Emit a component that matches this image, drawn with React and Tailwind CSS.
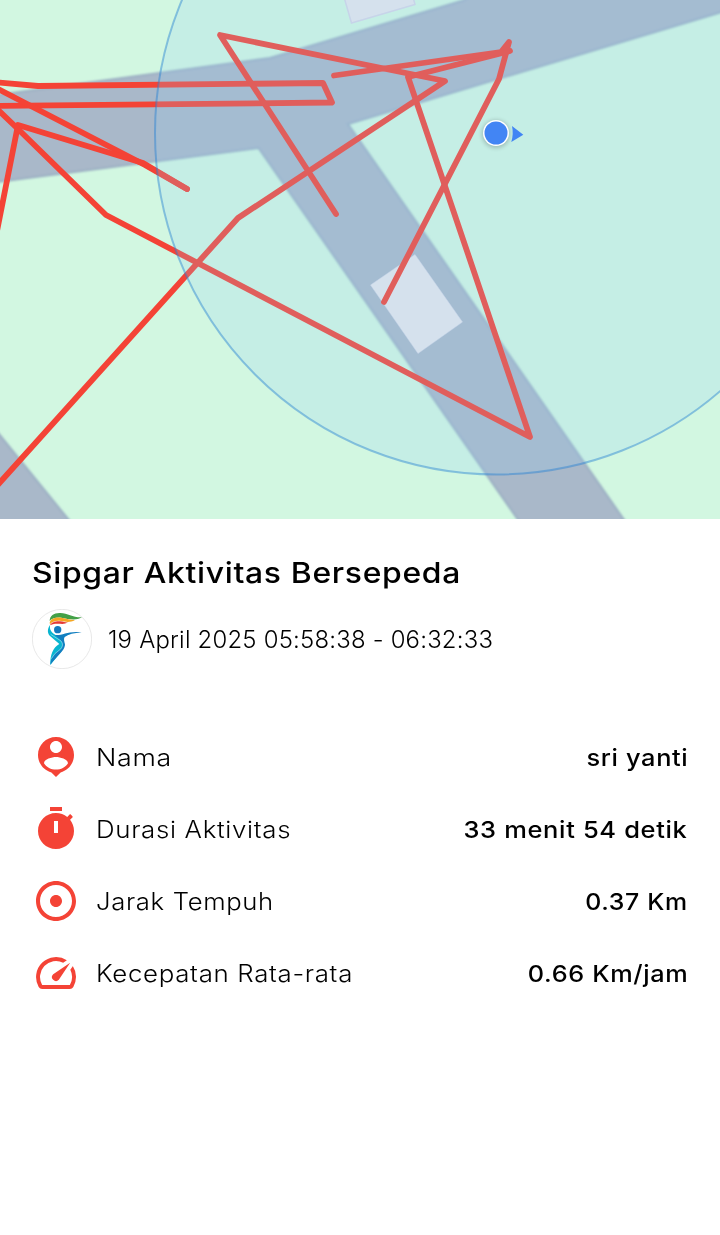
const ICONS = {
  person:
    "M12 2c-4.97 0-9 4.03-9 9 0 4.17 2.84 7.67 6.69 8.69L12 22l2.31-2.31C18.16 18.67 21 15.17 21 11c0-4.97-4.03-9-9-9zm0 2c1.66 0 3 1.34 3 3s-1.34 3-3 3-3-1.34-3-3 1.34-3 3-3zm0 14.3c-2.5 0-4.71-1.28-6-3.22.03-1.99 4-3.08 6-3.08 1.99 0 5.97 1.09 6 3.08-1.29 1.94-3.5 3.22-6 3.22z",
  timer:
    "M15 1H9v2h6V1zm4.03 6.39 1.42-1.42c-.43-.51-.9-.99-1.41-1.41l-1.42 1.42C16.07 4.74 14.12 4 12 4c-4.97 0-9 4.03-9 9s4.02 9 9 9 9-4.03 9-9c0-2.12-.74-4.07-1.97-5.61zM13 14h-2V8h2v6z",
  distance:
    "M12 2C6.49 2 2 6.49 2 12s4.49 10 10 10 10-4.49 10-10S17.51 2 12 2zm0 18c-4.41 0-8-3.59-8-8s3.59-8 8-8 8 3.59 8 8-3.59 8-8 8zm3-8c0 1.66-1.34 3-3 3s-3-1.34-3-3 1.34-3 3-3 3 1.34 3 3z",
  speed:
    "M20.38 8.57l-1.23 1.85a8 8 0 0 1-.22 7.58H5.07A8 8 0 0 1 15.58 6.85l1.85-1.23A10 10 0 0 0 3.35 19a2 2 0 0 0 1.72 1h13.85a2 2 0 0 0 1.74-1 10 10 0 0 0-.27-10.44zm-9.79 6.84a2 2 0 0 0 2.83 0l5.66-8.49-8.49 5.66a2 2 0 0 0 0 2.83z",
};

const STATS = [
  { icon: "person", label: "Nama", value: "sri yanti", labelClass: "scale-x-[1.14]", valueClass: "scale-x-[1.08]" },
  { icon: "timer", label: "Durasi Aktivitas", value: "33 menit 54 detik", labelClass: "scale-x-[1.10]", valueClass: "scale-x-[1.085]" },
  { icon: "distance", label: "Jarak Tempuh", value: "0.37 Km", labelClass: "scale-x-[1.092]", valueClass: "scale-x-[1.06]" },
  { icon: "speed", label: "Kecepatan Rata-rata", value: "0.66 Km/jam", labelClass: "scale-x-[1.10]", valueClass: "scale-x-[1.075]" },
];

// GPS track segments
const TRACKS = [
  "-6,82 38,86 323,83 332,102.5 -6,106",
  "-6,87 145,165 187,189",
  "187,189 143,163 18,125 -4,236",
  "-6,106 18,129 106,215 530,437 408,77 510,51",
  "-6,489 238,218 445,81 220,35 336,214",
  "334,75.5 501,52 509,42 499,79 384,302",
];

const ROADS = [
  "-10,96 270,58 463,0.5 480,-10 730,-10 730,9.500 348,124 623.500,519 631,530 525,530 517.500,519 258.500,148 -10,183",
  "-10,423 68,519 79,532 -10,532",
];

export default function App() {
  return (
    <main className="min-h-[1235px] w-full bg-white text-black font-['Inter',sans-serif]">
      <ActivityMap />
      <section className="px-8 pt-[33px]">
        <h1 className="w-fit origin-left scale-x-[1.1] text-[29px] leading-[42px] font-[550] tracking-[0.6px] whitespace-nowrap">
          Sipgar Aktivitas Bersepeda
        </h1>
        <div className="mt-[15px] flex items-center gap-4">
          <Logo />
          <p className="origin-left scale-x-[1.018] pt-0.5 text-[23.5px] font-light tracking-[0.2px] whitespace-nowrap">
            19 April 2025 05:58:38 - 06:32:33
          </p>
        </div>
        <div className="mt-16 flex flex-col gap-6">
          {STATS.map((stat) => (
            <StatRow key={stat.label} {...stat} />
          ))}
        </div>
      </section>
    </main>
  );
}

function StatRow({ icon, label, value, labelClass, valueClass }) {
  return (
    <div className="flex h-12 items-center whitespace-nowrap text-[23.5px] tracking-[0.6px]">
      <svg viewBox="0 0 24 24" className="mr-4 size-12 shrink-0 fill-[#f44336]">
        <path d={ICONS[icon]} />
      </svg>
      <span className={`origin-left pt-0.5 font-light ${labelClass}`}>{label}</span>
      <span className={`ml-auto origin-right pt-0.5 font-[550] ${valueClass}`}>{value}</span>
    </div>
  );
}

function ActivityMap() {
  return (
    <svg viewBox="0 0 720 519" className="block h-[519px] w-full bg-[#d2f7e1]">
      <defs>
        <filter id="soft" x="-5%" y="-5%" width="110%" height="110%">
          <feGaussianBlur stdDeviation="0.9" />
        </filter>
        <filter id="shadow" x="-50%" y="-50%" width="200%" height="200%">
          <feGaussianBlur stdDeviation="2" />
        </filter>
      </defs>
      <g filter="url(#soft)" fill="#a9b8c9" stroke="#9bafc3" strokeWidth="2">
        {ROADS.map((points) => (
          <polygon key={points} points={points} />
        ))}
      </g>
      <g fill="#e6e7ec" stroke="#d5d6e6" strokeWidth="1.5">
        <polygon points="344,-3 351.5,23 415,4.5 413,-3" />
        <polygon points="370.5,285 415,254.5 462.5,322 418,353.5" strokeWidth="0.5" />
      </g>
      <g fill="none" stroke="#f44336" strokeWidth="5.8" strokeLinecap="round" strokeLinejoin="round">
        {TRACKS.map((points) => (
          <polyline key={points} points={points} />
        ))}
      </g>
      {/* accuracy radius */}
      <circle cx="496.5" cy="133" r="341.5" fill="#90cdf5" fillOpacity="0.2" stroke="#2680d2" strokeOpacity="0.45" strokeWidth="2" />
      <circle cx="496" cy="134" r="14" opacity="0.2" filter="url(#shadow)" />
      <circle cx="496" cy="133" r="13" fill="#fff" />
      <circle cx="496" cy="133" r="11.5" fill="#4285f4" />
      <path d="M512 126l11.3 8.7-12 7.3q2.4-8 .7-16z" fill="#4285f4" />
    </svg>
  );
}

function Logo() {
  return (
    <svg viewBox="24 27 180 180" className="size-[60px] shrink-0">
      <circle cx="114" cy="117" r="89" fill="#fff" stroke="#dcdcdc" strokeWidth="2" />
      <path d="M77 63C77 46 91 38 109 39C132 40 146 53 174 52C153 64 133 56 111 53C94 52 82 56 77 63Z" fill="#43a047" />
      <path d="M77 68C80 55 95 51 113 53C129 55 140 61 153 60C139 68 126 66 111 63C96 61 84 65 78 73Z" fill="#f5a623" />
      <path d="M78 76C82 66 96 63 109 64C119 65 125 68 132 67C121 74 111 71 101 71C89 71 83 73 78 76Z" fill="#e53935" />
      <circle cx="101" cy="89" r="11" fill="#1279bd" />
      <path d="M78 75C69 88 70 100 79 109L106 132C87 143 78 164 79 195C88 183 105 165 117 147C125 133 121 124 110 115L89 101C79 94 77 86 78 75Z" fill="#08b5d0" />
      <path d="M92 105C115 108 132 91 173 97C150 99 133 103 122 111C118 116 121 124 123 134C121 154 99 166 79 194C81 171 94 157 112 146C118 137 117 125 106 117Z" fill="#127fc0" />
      <path d="M80 103L111 123Q121 135 109 148Q90 160 82 176" fill="none" stroke="#d9f3fa" strokeWidth="1.5" />
    </svg>
  );
}
